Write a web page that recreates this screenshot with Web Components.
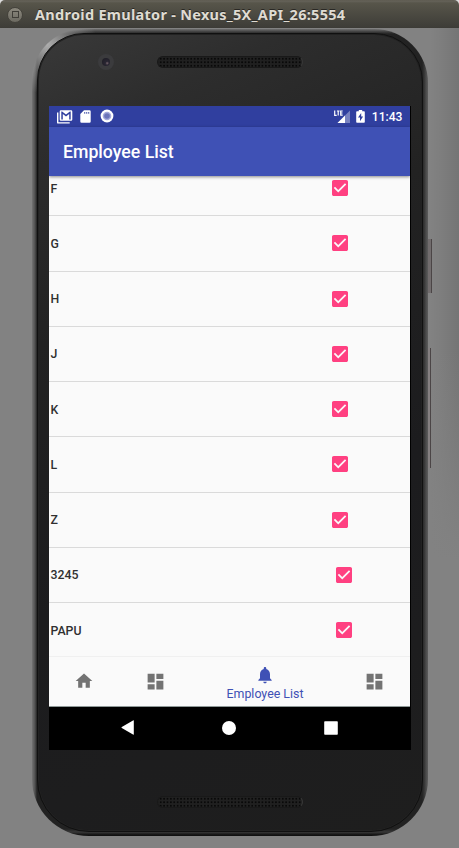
<!DOCTYPE html>
<html lang="en">
<head>
<meta charset="utf-8">
<title>Android Emulator</title>
<style>
body{margin:0;width:459px;height:848px;overflow:hidden;background:#828282;font-family:Roboto,sans-serif}
</style>
</head>
<body>
<emulator-window></emulator-window>
<script>
const define = (name, html) => customElements.define(name, class extends HTMLElement {
  constructor() {
    super();
    const t = document.createElement('template');
    t.innerHTML = html;
    this.attachShadow({mode: 'open'}).append(t.content.cloneNode(true));
  }
});

const glyphs = {
  home: ['0 0 24 24', '<path d="M10 20v-6h4v6h5v-8h3L12 3 2 12h3v8z"/>'],
  dashboard: ['0 0 24 24', '<path d="M3 13h8V3H3v10zm0 8h8v-6H3v6zm10 0h8V11h-8v10zm0-18v6h8V3h-8z"/>'],
  bell: ['0 0 24 24', '<path d="M12 22c1.1 0 2-.9 2-2h-4c0 1.1.89 2 2 2zm6-6v-5c0-3.07-1.64-5.64-4.5-6.32V4c0-.83-.67-1.5-1.5-1.5s-1.5.67-1.5 1.5v.68C7.63 5.36 6 7.92 6 11v5l-2 2v1h16v-1l-2-2z"/>'],
  check: ['3 3 18 18', '<path d="M19 3H5c-1.11 0-2 .9-2 2v14c0 1.1.89 2 2 2h14c1.11 0 2-.9 2-2V5c0-1.1-.89-2-2-2zm-9 14l-5-5 1.41-1.41L10 14.17l7.59-7.59L19 8l-9 9z"/>'],
  mail: ['0 0 16 14', '<path d="M0 2.5h1.4v9.7h11.3v1.4H1.2A1.2 1.2 0 0 1 0 12.4z"/><path fill-rule="evenodd" d="M3.9.2h10.2a1.2 1.2 0 0 1 1.2 1.2v8.200a1.200 1.200 0 0 1-1.200 1.200H3.900a1.200 1.200 0 0 1-1.200-1.200V1.400A1.200 1.200 0 0 1 3.900.2zM4.300 9.400h1.500V4L9 6.400 12.200 4v5.400h1.500V1.500h-.8L9 4.600 5.100 1.500h-.8z"/>'],
  card: ['0 0 11 13', '<path fill-rule="evenodd" d="M4 .3h5.500a1.200 1.200 0 0 1 1.200 1.200v10a1.200 1.200 0 0 1-1.200 1.200h-8A1.200 1.200 0 0 1 .3 11.500V4zM4.300 2v1.700h.9V2zm2 0v1.700h.9V2zm2 0v1.700h.9V2z"/>'],
  disc: ['0 0 14 14', '<circle cx="7" cy="7" r="6.400"/><circle cx="7" cy="7" r="4.300" fill="#a5aadb"/><circle cx="7" cy="7" r="2.800" fill="#6b74ba"/>'],
  signal: ['0 0 16 14', '<path opacity=".35" d="M16 .5V13H3.500z"/><path d="M11 5.500V13H3.500z"/><g fill="none" stroke="#fff" stroke-width="1.200"><path d="M.7.500v4.800h2M2.900 1h2.600M4.200 1v4.600M8.700 1H6.700v4.100h2M6.700 3h1.800"/></g>'],
  battery: ['0 0 9 13', '<path fill-rule="evenodd" d="M2.800 0h3.400v1.200H8a.8.8 0 0 1 .8.8v10a.8.8 0 0 1-.8.8H1a.8.8 0 0 1-.8-.8V2a.8.8 0 0 1 .8-.8h1.800zM5.200 3 2 7.500h2v3.700L7.100 6.500H5.200z"/>'],
  back: ['0 0 14 15', '<path d="M12.800.8v13.400a.5.5 0 0 1-.8.400L.8 8a.6.6 0 0 1 0-1L12 .4a.5.5 0 0 1 .8.400z"/>'],
  circle: ['0 0 14 14', '<circle cx="7" cy="7" r="7"/>'],
  square: ['0 0 14 14', '<rect x=".2" y=".2" width="13.600" height="13.600" rx=".8"/>']
};
customElements.define('ui-icon', class extends HTMLElement {
  connectedCallback() {
    if (this.shadowRoot) return;
    const [box, body] = glyphs[this.getAttribute('name')];
    const w = this.getAttribute('w'), h = this.getAttribute('h') || w;
    this.attachShadow({mode: 'open'}).innerHTML =
      `<style>:host{display:block;flex:none;width:${w}px;height:${h}px}svg{display:block}</style>
       <svg width="${w}" height="${h}" viewBox="${box}" fill="currentColor">${body}</svg>`;
  }
});

define('title-bar', `
<style>
:host{display:flex;align-items:center;height:28px;box-sizing:border-box;padding:1px 0 0 7px;background:linear-gradient(#5b584d 0,#66635a 1px,#57554a 3px,#3e3d38 27px,#3b3a35);border-radius:5px 5px 0 0;
 color:#dfdbd2;font:bold 14.500px/24px "Noto Sans",sans-serif}
i{box-sizing:border-box;width:16px;height:16px;border-radius:50%;background:linear-gradient(#8b887d,#6c6a61);border:1px solid #44423b;display:grid;place-items:center;margin-right:12px}
b{display:block;width:5px;height:5px;border:1px solid #403e38}
span{white-space:nowrap;text-shadow:0 -1px #292824;letter-spacing:.28px;margin-top:-1px}
</style><i><b></b></i><span><slot></slot></span>`);

define('speaker-grille', `
<style>
:host{display:block;width:146px;height:12px;border-radius:7px;box-sizing:border-box;border:1px solid #191919;border-right-color:#393939;
 background:radial-gradient(circle,#090909 .8px,transparent 1.200px) 1px 0/3.400px 3.500px,#202020}
</style>`);

define('status-bar', `
<style>
:host{display:flex;align-items:center;height:21px;box-sizing:border-box;padding:0 7.500px 0 8px;background:#303f9f;color:#fff;font:500 12.100px/21px Roboto,sans-serif}
.gap{flex:1}.card{margin:0 9px 0 7px}.disc{margin-top:-1px}.bat{margin:0 6.500px 0 6px}
span{padding-top:1px}
</style>
<ui-icon name="mail" w="16" h="14"></ui-icon><ui-icon class="card" name="card" w="11" h="13"></ui-icon><ui-icon class="disc" name="disc" w="14"></ui-icon>
<span class="gap"></span>
<ui-icon name="signal" w="16" h="14"></ui-icon><ui-icon class="bat" name="battery" w="9" h="13"></ui-icon><span>11:43</span>`);

define('app-bar', `
<style>
:host{display:block;height:49px;background:#3f51b5;color:#fff;box-shadow:0 1px 3px rgba(0,0,0,.45);padding-left:14px;font:500 17.700px/51px Roboto,sans-serif;position:relative;z-index:1}
</style><slot></slot>`);

define('employee-row', `
<style>
:host{display:flex;align-items:center;height:55.250px;box-sizing:border-box;border-bottom:1px solid #dadada;color:#303030;font:500 12.300px/16px Roboto,sans-serif}
span{width:var(--name-width,283.300px);padding:1px 0 0 1.500px;box-sizing:border-box;flex:none}
ui-icon{color:#ff4081}
</style><span><slot></slot></span><ui-icon name="check" w="16"></ui-icon>`);

define('employee-list', `
<style>
:host{display:flex;flex-direction:column;justify-content:flex-end;height:480px;overflow:hidden;background:#fafafa}
employee-row{flex:none}
employee-row:last-child{margin-bottom:-2.250px}
</style>
<employee-row>F</employee-row><employee-row>G</employee-row><employee-row>H</employee-row><employee-row>J</employee-row><employee-row>K</employee-row><employee-row>L</employee-row><employee-row>Z</employee-row>
<employee-row style="--name-width:286.500px">3245</employee-row><employee-row style="--name-width:287px">PAPU</employee-row>`);

define('bottom-tabs', `
<style>
:host{display:grid;grid-template-columns:71px 71px 148px 71px;height:51px;box-sizing:border-box;background:#fafafa;border-top:1px solid #f0f0f0;border-bottom:1px solid #8f9998;color:#737373}
div{display:flex;flex-direction:column;align-items:center;padding-top:14px}
.home{padding-right:1.500px}
.on{color:#3f51b5;padding-top:8px;font:400 12.400px/16px Roboto,sans-serif}
.on span{padding-top:1px}
</style>
<div class="home"><ui-icon name="home" w="20"></ui-icon></div><div><ui-icon name="dashboard" w="21"></ui-icon></div>
<div class="on"><ui-icon name="bell" w="20"></ui-icon><span>Employee List</span></div><div><ui-icon name="dashboard" w="21"></ui-icon></div>`);

define('system-nav', `
<style>
:host{display:flex;align-items:center;justify-content:space-between;height:43px;box-sizing:border-box;padding:0 72px 2px 72px;background:#000;color:#fff}
.mid{margin:0 1px 0 -1px}
</style>
<ui-icon name="back" w="14" h="15"></ui-icon><ui-icon class="mid" name="circle" w="14"></ui-icon><ui-icon name="square" w="14"></ui-icon>`);

define('phone-frame', `
<style>
:host{display:block;position:relative;width:396px;height:807px;margin:1px 0 0 32px}
.shell{height:100%;box-sizing:border-box;padding:4px 5px;border-radius:51px 54px 57px 57px;
 background:radial-gradient(circle at 15px 15px,rgba(190,190,190,.9),transparent 50px),linear-gradient(90deg,#747474,#505050 3px,#222 5px,transparent 6px,transparent 390px,#333 392px,#4a4a4a 394px,#5c5c5c),linear-gradient(#707070,#3c3c3c 3px,#222 5px,#222 800px,#383838 803px,#111 806px)}
.face{height:100%;box-sizing:border-box;border-radius:47px 49px 52px 52px;border:1px solid #101010;box-shadow:inset 0 0 0 1px #222;
 background:linear-gradient(155deg,#393939 0,#2d2d2d 12%,#222 32%,#1c1c1e 60%,#1e1e1e);
 display:grid;grid-template-rows:72px 644px 1fr;justify-items:start}
.top{display:flex;align-items:center;padding:0 0 17px 60px}
.cam{width:8px;height:8px;border-radius:50%;border:4px solid #3b3b3d;background:radial-gradient(circle at 65% 65%,#75636b 0,#292632 25%,#1c1b22);margin-right:43px}
.screen{margin-left:11px;width:361px;border-right:1px solid #000;overflow:hidden;background:#000}
.bottom{padding:46px 0 0 119px}
.key{position:absolute;left:396px;width:2px;box-sizing:content-box;border-right:1px solid #4b4546;background:#716c6d}
.power{top:210px;height:54px;width:3px}.volume{top:319px;height:120px;width:2px;background:#858081}
</style>
<div class="shell"><div class="face">
<div class="top"><div class="cam"></div><speaker-grille></speaker-grille></div>
<div class="screen"><slot></slot></div>
<div class="bottom"><speaker-grille></speaker-grille></div>
</div></div>
<div class="key power"></div><div class="key volume"></div>`);

define('emulator-window', `
<style>
:host{display:block;height:848px;background:linear-gradient(transparent 350px,#828282 560px),linear-gradient(90deg,transparent 430px,rgba(0,0,0,.03) 440px,rgba(0,0,0,.10)),#828282}
.cap{background:#ddd}
</style>
<div class="cap"><title-bar>Android Emulator - Nexus_5X_API_26:5554</title-bar></div>
<phone-frame><status-bar></status-bar><app-bar>Employee List</app-bar><employee-list></employee-list><bottom-tabs></bottom-tabs><system-nav></system-nav></phone-frame>`);
</script>
</body>
</html>
